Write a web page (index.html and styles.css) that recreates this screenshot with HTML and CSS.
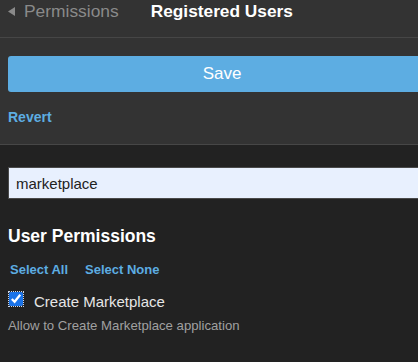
FILE: index.html
```html
<!DOCTYPE html>
<html>
<head>
<meta charset="utf-8">
<link rel="stylesheet" href="styles.css">
</head>
<body>
<div class="page">
  <header class="topbar">
    <a class="back">
      <svg class="back-arrow" width="8" height="9" viewBox="0 0 8 9"><polygon points="0,4.5 7,0 7,9" fill="#8a8a8a"/></svg>
      <span>Permissions</span>
    </a>
    <h1 class="title">Registered Users</h1>
  </header>
  <section class="actions">
    <button class="save">Save</button>
    <a class="revert">Revert</a>
  </section>
  <main class="content">
    <input class="search" type="text" value="marketplace">
    <h2 class="section-title">User Permissions</h2>
    <div class="select-links">
      <a class="link">Select All</a>
      <a class="link">Select None</a>
    </div>
    <label class="perm">
      <input class="perm-check" type="checkbox" checked>
      <span class="perm-name">Create Marketplace</span>
    </label>
    <p class="perm-desc">Allow to Create Marketplace application</p>
  </main>
</div>
</body>
</html>
```
FILE: styles.css
```css
* { box-sizing: border-box; }
html, body {
  margin: 0;
  padding: 0;
  overflow: hidden;
  background: #222222;
  font-family: "Liberation Sans", Arial, sans-serif;
}
.page {
  width: 444px;
  min-height: 362px;
  background: #222222;
}
.topbar {
  height: 38px;
  background: #333333;
  border-bottom: 1px solid #464646;
  display: flex;
  align-items: flex-start;
  padding: 1px 0 0 8px;
}
.back {
  display: flex;
  align-items: center;
  color: #8a8a8a;
  font-size: 17.4px;
  line-height: 20px;
}
.back-arrow {
  margin: 1px 8px 0 0;
}
.title {
  margin: 0 0 0 32px;
  color: #ffffff;
  font-size: 17.3px;
  line-height: 20px;
  font-weight: bold;
}
.actions {
  background: #333333;
  padding: 18px 8px 19px;
  border-bottom: 1px solid #474747;
  display: flex;
  flex-direction: column;
  align-items: flex-start;
}
.save {
  width: 428px;
  height: 36px;
  border: 0;
  border-radius: 3px;
  background: #5dade2;
  color: #ffffff;
  font-family: "Liberation Sans", Arial, sans-serif;
  font-size: 17px;
  padding: 0;
}
.revert {
  margin-top: 17px;
  color: #5dade2;
  font-weight: bold;
  font-size: 14px;
  line-height: 16px;
}
.content {
  padding: 22px 8px 0;
  display: flex;
  flex-direction: column;
  align-items: flex-start;
}
.search {
  width: 428px;
  height: 32px;
  margin: 0;
  border: 1px solid #4a4a4a;
  background: #e8f0fe;
  color: #222222;
  font-family: "Liberation Sans", Arial, sans-serif;
  font-size: 15px;
  padding: 0 7px;
  outline: none;
}
.section-title {
  margin: 27px 0 0;
  color: #ffffff;
  font-size: 17.5px;
  line-height: 21px;
  font-weight: bold;
}
.select-links {
  margin-top: 15px;
  padding-left: 2px;
  display: flex;
  gap: 17px;
}
.link {
  color: #5dade2;
  font-weight: bold;
  font-size: 13px;
  line-height: 16px;
}
.perm {
  margin-top: 11px;
  display: flex;
  align-items: flex-start;
}
.perm-check {
  width: 14px;
  height: 14px;
  margin: 3px 0 0 1px;
  accent-color: #1a73e8;
  outline: 1px dotted #cfd8e8;
  outline-offset: 0;
}
.perm-name {
  margin: 4px 0 0 11px;
  color: #e6e6e6;
  font-size: 15px;
  line-height: 18px;
}
.perm-desc {
  margin: 7px 0 0;
  color: #a0a0a0;
  font-size: 13.2px;
  line-height: 16px;
}
```
